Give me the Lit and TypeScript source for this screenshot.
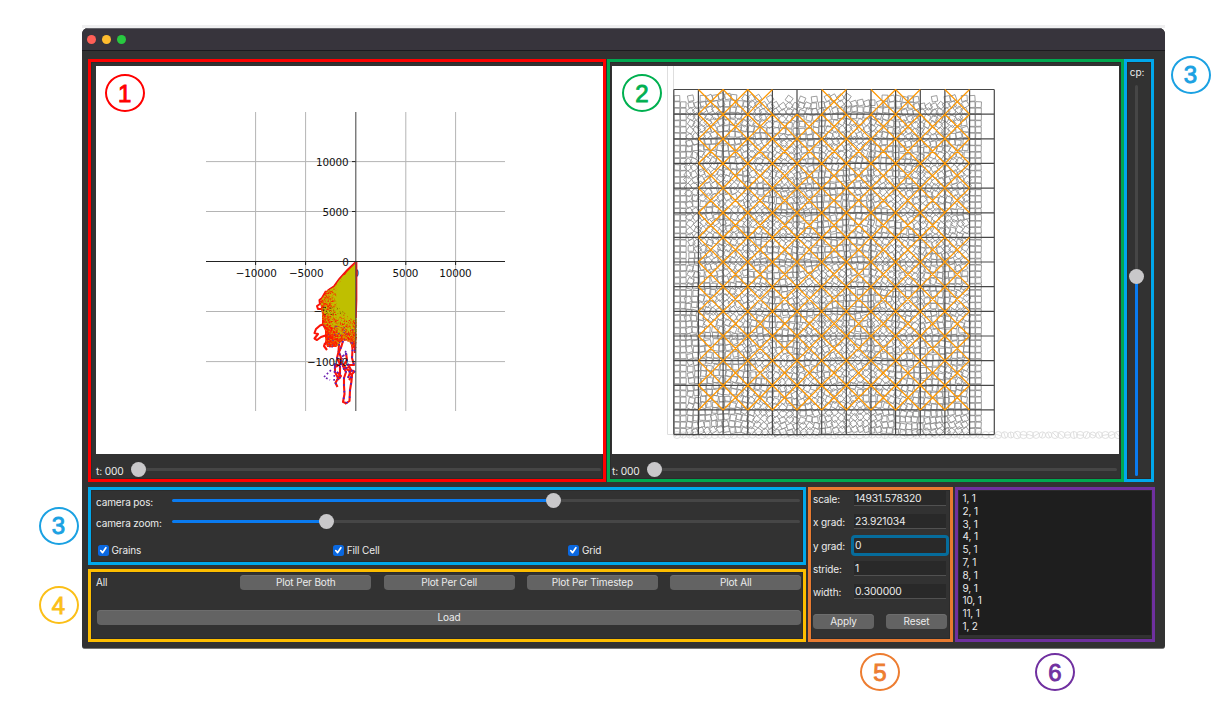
import { LitElement, html, css, svg } from "lit";
import { customElement, property } from "lit/decorators.js";
import { classMap } from "lit/directives/class-map.js";

function makeRandom(seed: number) {
  let s = seed >>> 0;
  return () => {
    s = (s + 0x6d2b79f5) >>> 0;
    let t = s;
    t = Math.imul(t ^ (t >>> 15), t | 1);
    t ^= t + Math.imul(t ^ (t >>> 7), t | 61);
    return ((t ^ (t >>> 14)) >>> 0) / 4294967296;
  };
}

type Point = [number, number];

function inside(x: number, y: number, poly: Point[]) {
  let hit = false;
  for (let i = 0, j = poly.length - 1; i < poly.length; j = i++) {
    const [xi, yi] = poly[i];
    const [xj, yj] = poly[j];
    if (yi > y !== yj > y && x < ((xj - xi) * (y - yi)) / (yj - yi) + xi) hit = !hit;
  }
  return hit;
}

/* ---------- stress scatter plot ---------- */

const CLOUD: Point[] = [
  [356, 262], [347, 270], [339, 279], [334, 286], [327, 290], [323, 296], [320, 302],
  [321, 308], [322, 314], [322, 325], [325, 330], [325, 338], [327, 347], [332, 347], [338, 346],
  [342, 340], [349, 341], [352, 347], [356, 349],
];
const CORE: Point[] = [
  [355.5, 263.5], [347, 272], [340, 282], [337, 290], [336, 300], [338, 307], [344, 312], [349, 318], [355.5, 320],
];

function scatter(seed: number, n: number, poly: Point[], y0: number, y1: number, accept: (x: number, y: number, r: number) => boolean) {
  const rnd = makeRandom(seed);
  let d = "";
  for (let i = 0; i < n; i++) {
    const x = 318 + rnd() * 38;
    const y = y0 + rnd() * (y1 - y0);
    if (inside(x, y, poly) && accept(x, y, rnd())) d += `M${x.toFixed(1)} ${y.toFixed(1)}h1v1h-1z`;
  }
  return d;
}

const toPath = (p: Point[]) => "M" + p.map((q) => q.join(" ")).join("L") + "Z";

const coreDistance = (x: number, y: number) => Math.max(0, (338 - x) * 0.8) + Math.max(0, y - 315) * 0.6;
const OLIVE_DOTS = scatter(7, 6500, CLOUD, 275, 346, (x, y, r) => r > 0.1 + coreDistance(x, y) / 20);
const ORANGE_DOTS = scatter(21, 2400, CLOUD, 284, 346, (x, y, r) => r > 0.35);
const RED_DOTS = scatter(33, 2200, CLOUD, 290, 348, (x, y, r) => r < coreDistance(x, y) / 40);
const BLUE_DOTS = scatter(54, 300, CLOUD, 324, 348, (x, y, r) => r > 0.86);

const TENDRILS = [
  "M326 291L322 298L319.5 300L320 304L317 306L318 309L323 309",
  "M324 324L320 325.5L316 329L314.5 333L318 334L314.5 338.5L317 340L321 337L327 335",
  "M325 343L324 346L327 350M327 339L325 345",
  "M339 344L338.5 352L337 358L340 364L336 367",
  "M343 341L341.5 346L339 352L341 358L341 363",
  "M352 343L352.5 350L352 358L354 365L347 365",
  "M346 353L347 360L343 366L346 372L344 378L344 386L344.5 394L343 402L346 403",
  "M355 371L352 374L351.5 381L350 390L349.5 401L345 404",
  "M335 364L335 372L338 378L335.5 383L337.5 387",
  "M340 366L340 373L338 380M348 364L351 370L348 378",
  "M334 366L342 364L348 370L354 371M343 369L350 367M337 372L341 376L339 379M349 371L352 376L349 380",
  "M355 343V353",
];

@customElement("stress-plot")
export class StressPlot extends LitElement {
  static styles = css`
    :host { display: block; width: 507px; height: 388px; background: #fff; }
    svg { display: block; }
    text { font: 10.4px "DejaVu Sans", sans-serif; fill: #111; }
    .grid { stroke: #b4b4b4; stroke-width: 1; fill: none; }
    .axis { stroke: #222; stroke-width: 1; fill: none; }
    .spine { stroke: #505050; stroke-width: 1.1; fill: none; }
    .end { text-anchor: end; }
    .mid { text-anchor: middle; }
    .red { fill: #ff1a00; }
    .olive { fill: #bfbf00; }
    .orange { fill: #e07a00; }
    .blue { fill: #5a22c0; }
    .tendril { fill: none; stroke: #fb1408; stroke-width: 2.1; stroke-linejoin: round; }
    .tendril-dots { fill: none; stroke: #3b20dd; stroke-width: 1.7; stroke-dasharray: 1.5 5.2; }
    .stray { fill: none; stroke: #6a20b0; stroke-width: 1.7; stroke-dasharray: 1.8 2.2; }
    .edge { fill: none; stroke: #f01010; stroke-width: 1.5; }
  `;
  render() {
    return html`<svg width="507" height="388" viewBox="96 66 507 388">
      <path class="grid" d="M255.6 112V411M305.6 112V411M405.8 112V411M455.6 112V411M206 161.6H505M206 211.5H505M206 311.5H505M206 361.6H505"></path>
      <text class="mid" x="256.3" y="277">−10000</text>
      <text class="mid" x="306.3" y="277">−5000</text>
      <text class="mid" x="355.8" y="277">0</text>
      <text class="mid" x="405.4" y="277">5000</text>
      <text class="mid" x="455.4" y="277">10000</text>
      <path class="red" d=${toPath(CLOUD)}></path>
      ${TENDRILS.map((d, i) => svg`<path class="tendril" d=${d}></path>${i > 2 ? svg`<path class="tendril-dots" d=${d}></path>` : ""}`)}
      <path class="stray" d="M324 377L328 373L331 370M326 378L330 380M335 363L334 382M346 351L342 359M347 354L341 357"></path>
      <path class="orange" d=${ORANGE_DOTS}></path>
      <text class="end" x="348" y="315.3">−5000</text>
      <path class="olive" d=${OLIVE_DOTS}></path>
      <path class="red" d=${RED_DOTS}></path>
      <path class="blue" d=${BLUE_DOTS}></path>
      <path class="olive" d=${toPath(CORE)}></path>
      <path class="edge" d="M356 261.5L347 270L339 279L334 286L328 290M356.6 262V300L356 318"></path>
      <path class="spine" d="M355.8 112V411"></path>
      <path class="axis" d="M206 261.5H505M255.6 261.5v3.5M305.6 261.5v3.5M405.8 261.5v3.5M455.6 261.5v3.5M352 161.6h3.5M352 211.5h3.5M352 361.6h3.5"></path>
      <text class="end" x="348.4" y="165.8">10000</text>
      <text class="end" x="348.4" y="215.5">5000</text>
      <text class="end" x="348.8" y="265.7">0</text>
      <text class="end" x="348" y="365.7">−10000</text>
    </svg>`;
  }
}

/* ---------- grain packing plot ---------- */

const X0 = 673.8;
const Y0 = 89.5;
const PITCH = 24.65;
const EMPTY_CELLS = new Set(["4,0", "5,0", "7,0", "10,0", "11,5"]);

function square(cx: number, cy: number, size: number, angle: number) {
  const r = size / Math.SQRT2;
  const pts: string[] = [];
  for (let k = 0; k < 4; k++) {
    const a = angle + Math.PI / 4 + (k * Math.PI) / 2;
    pts.push(`${(cx + r * Math.cos(a)).toFixed(1)} ${(cy + r * Math.sin(a)).toFixed(1)}`);
  }
  return "M" + pts.join("L") + "Z";
}

function grainPath() {
  const rnd = makeRandom(91);
  const step = 6.28;
  let d = "";
  for (let j = 0; j < 54; j++) {
    for (let i = 0; i < 49; i++) {
      const x = X0 + 3.2 + i * step;
      const y = 431.2 - j * step;
      const wall = i < 2 || i > 46;
      const field = Math.sin(x / 19 + Math.cos(y / 27) * 2) + Math.cos(y / 17 - x / 41);
      const angle = wall ? (rnd() - 0.5) * 0.14 : field * 0.55 + (rnd() - 0.5) * 0.5;
      const dx = wall ? 0 : Math.sin(y / 23 + x / 31) * 1.4 + (rnd() - 0.5) * 1.7;
      const dy = wall ? 0 : Math.cos(x / 21) * 1.4 + (rnd() - 0.5) * 1.7;
      if (j === 53 && rnd() < 0.45) continue;
      d += square(x + dx, y + dy, 5.5 + rnd() * 0.4, angle);
    }
  }
  return d;
}

function gridPath() {
  let d = "";
  for (let i = 0; i <= 13; i++) d += `M${(X0 + i * PITCH).toFixed(1)} ${Y0}V434.6`;
  for (let j = 0; j <= 14; j++) d += `M${X0} ${(Y0 + j * PITCH).toFixed(1)}H994.2`;
  return d;
}

function stressPath() {
  let d = "";
  for (let j = 0; j < 13; j++)
    for (let i = 1; i < 12; i++) {
      if (EMPTY_CELLS.has(`${i},${j}`)) continue;
      const x = X0 + i * PITCH;
      const y = Y0 + j * PITCH;
      d += `M${x.toFixed(1)} ${y.toFixed(1)}l${PITCH} ${PITCH}m0 ${-PITCH}l${-PITCH} ${PITCH}`;
    }
  return d;
}

function floorPath() {
  const rnd = makeRandom(5);
  let d = "";
  for (let x = 677; x < 1122; x += 6.3) {
    const r = 3 + rnd() * 0.8;
    const a = rnd() * Math.PI;
    const c = r * Math.cos(a);
    const s = r * Math.sin(a);
    d += `M${x - r} 435a${r} ${r} 0 1 0 ${2 * r} 0a${r} ${r} 0 1 0 ${-2 * r} 0M${x - c} ${435 - s}l${2 * c} ${2 * s}`;
  }
  return d;
}

const GRAINS = grainPath();
const GRID = gridPath();
const STRESS = stressPath();
const FLOOR = floorPath();

@customElement("grain-plot")
export class GrainPlot extends LitElement {
  static styles = css`
    :host { display: block; width: 507px; height: 388px; background: #fff; }
    svg { display: block; }
    path { fill: none; }
    .wall { stroke: #dedede; stroke-width: 1; }
    .floor { stroke: #dcdcdc; stroke-width: 0.9; }
    .grains { stroke: #8c8c8c; stroke-width: 0.85; }
    .grid { stroke: #484848; stroke-width: 1.2; }
    .stress { stroke: #ff9800; stroke-width: 1.25; }
  `;
  render() {
    return html`<svg width="507" height="388" viewBox="612 66 507 388">
      <path class="wall" d="M667.5 66V434.5H674M673.5 66V434"></path>
      <path class="floor" d=${FLOOR}></path>
      <path class="grains" d=${GRAINS}></path>
      <path class="grid" d=${GRID}></path>
      <path class="stress" d=${STRESS}></path>
    </svg>`;
  }
}

/* ---------- controls ---------- */

@customElement("range-track")
export class RangeTrack extends LitElement {
  @property({ type: Number }) value = 0;
  @property({ type: Boolean, reflect: true }) vertical = false;
  static styles = css`
    :host { display: flex; align-items: center; height: 16px; }
    :host([vertical]) { flex-direction: column; width: 16px; height: auto; }
    .fill { height: 3px; background: #0a7bf0; border-radius: 2px; flex: none; }
    .rest { height: 3px; background: #464646; border-radius: 2px; flex: 1; }
    .knob { width: 15px; height: 15px; margin: 0 -7.5px; border-radius: 50%; background: #c9c8ca; flex: none; z-index: 1; }
    :host([vertical]) .fill, :host([vertical]) .rest { width: 3px; height: auto; }
    :host([vertical]) .knob { margin: -7.5px 0; }
  `;
  render() {
    const size = `${this.value * 100}%`;
    if (this.vertical)
      return html`<div class="rest"></div><div class="knob"></div><div class="fill" style="height:${size}"></div>`;
    return html`<div class="fill" style="width:${size}"></div><div class="knob"></div><div class="rest"></div>`;
  }
}

const FIELDS = [
  { label: "scale:", value: "14931.578320" },
  { label: "x grad:", value: "23.921034" },
  { label: "y grad:", value: "0", focus: true },
  { label: "stride:", value: "1" },
  { label: "width:", value: "0.300000" },
];
const CELLS = ["1, 1", "2, 1", "3, 1", "4, 1", "5, 1", "7, 1", "8, 1", "9, 1", "10, 1", "11, 1", "1, 2"];
const BADGES = [
  { n: 1, x: 124.6, y: 93, tone: "red" },
  { n: 2, x: 642, y: 93, tone: "green" },
  { n: 3, x: 1190.5, y: 74.5, tone: "cyan" },
  { n: 3, x: 58.5, y: 525.7, tone: "cyan" },
  { n: 4, x: 58.5, y: 605, tone: "yellow" },
  { n: 5, x: 880, y: 672, tone: "orange" },
  { n: 6, x: 1055, y: 672.3, tone: "purple" },
];

@customElement("app-root")
export class AppRoot extends LitElement {
  static styles = css`
    :host {
      display: block; position: relative; width: 1218px; height: 706px; overflow: hidden;
      background: #fff; color: #ececec; font: 10px/13px Inter, "Liberation Sans", sans-serif; letter-spacing: -0.13px;
    }
    * { box-sizing: border-box; }
    .page { padding: 25px 53px 0 82px; }
    .glow { height: 3px; background: #efeff0; }
    .window { height: 620.5px; width: 1083px; background: #323232; border-radius: 6px 6px 3px 3px; border-bottom: 1px solid #777; overflow: hidden; }
    .titlebar { height: 23px; background: #37343c; border-top: 1px solid #64646a; border-bottom: 1px solid #1c1b1f; display: flex; align-items: center; gap: 6px; padding-left: 5px; }
    .light { width: 9px; height: 9px; border-radius: 50%; }
    .close { background: #ff5f57; }
    .min { background: #febc2e; }
    .max { background: #28c840; }
    .content { padding: 8px 10px 0 6px; display: flex; flex-direction: column; gap: 5px; }
    .row { display: flex; }
    .panel { border: 3px solid; box-shadow: inset 0 0 0 1px rgba(0, 0, 0, 0.13); }
    .red { border-color: #ff0000; }
    .green { border-color: #00a850; }
    .cyan { border-color: #00a8ec; }
    .yellow { border-color: #fdbd00; }
    .orange { border-color: #e87a30; }
    .purple { border-color: #6f309f; }
    .view { height: 423px; display: flex; flex-direction: column; }
    .first { width: 518px; margin-right: 1px; padding: 4px 0 0 5px; }
    .second { width: 517px; padding: 4px 0 0 2px; }
    .time { display: flex; align-items: center; height: 25px; padding-top: 6px; }
    .time span { width: 42.5px; padding-top: 3px; font-size: 10.2px; }
    .time range-track { width: 462.5px; }
    .side { width: 30px; display: flex; flex-direction: column; align-items: center; padding: 4px 5px 2px 0; }
    .side span { padding-left: 1px; }
    .side range-track { height: 391px; margin-top: 6px; }
    .left { width: 718px; display: flex; flex-direction: column; gap: 4px; margin-right: 2px; }
    .camera { height: 78px; padding: 0 3px 0 5px; }
    .slide { display: flex; align-items: center; height: 21px; }
    .slide span { width: 75.5px; padding-top: 3px; }
    .slide range-track { flex: 1; }
    .checks { display: grid; grid-template-columns: repeat(3, 235.2px); padding: 12px 0 0 2px; }
    .check { display: flex; align-items: center; gap: 3px; }
    .box { width: 10.5px; height: 10.5px; border-radius: 2.5px; background: #0a68e0; display: block; }
    .tick { fill: none; stroke: #fff; stroke-width: 1.6; stroke-linecap: round; stroke-linejoin: round; }
    .plots { height: 73px; padding: 3px 2px 0 5px; }
    .buttons { display: grid; grid-template-columns: 132px repeat(4, 131px); column-gap: 12.3px; align-items: center; }
    .btn { height: 15px; border-radius: 4px; background: #636363; box-shadow: inset 0 1px #6d6d6d; text-align: center; line-height: 15px; display: block; }
    .load { margin: 20px 0 0 1px; width: 704px; }
    .form { width: 145px; height: 155px; padding: 1px 4px 0 2px; margin-right: 2px; }
    .field { display: flex; align-items: flex-start; height: 23.3px; }
    .field label { width: 41px; padding-top: 2px; }
    .input { flex: 1; height: 15px; background: #292929; border-bottom: 1px solid #515151; padding-left: 1px; line-height: 15px; font-size: 10.3px; }
    .focus { outline: 3px solid #066c9c; outline-offset: 0; border-bottom-color: #292929; border-radius: 1px; }
    .actions { display: grid; grid-template-columns: 61px 61px; column-gap: 12px; padding-top: 7px; }
    .list { width: 200px; height: 155px; padding: 1px 1px 0 1px; }
    .items { height: 144px; width: 192px; background: #1e1e1e; padding: 1px 0 0 3.5px; line-height: 12.8px; }
    .badge { position: absolute; width: 40px; height: 38px; margin: -19px 0 0 -20px; border: 2px solid; border-radius: 50%; display: flex; align-items: center; justify-content: center; font: 24px/24px "Liberation Sans", sans-serif; -webkit-text-stroke: 0.9px currentColor; letter-spacing: 0; padding-top: 1px; }
    .badge.red { color: #ff0000; }
    .badge.green { color: #00b050; }
    .badge.cyan { color: #1ba1e2; }
    .badge.yellow { color: #fbbf18; }
    .badge.orange { color: #ed7d31; }
    .badge.purple { color: #7030a0; }
  `;

  private check(label: string) {
    return html`<div class="check">
      <svg class="box" viewBox="0 0 10 10"><path class="tick" d="M2.6 5.3L4.3 7.3L7.5 2.6"></path></svg><span>${label}</span>
    </div>`;
  }

  render() {
    return html`
      <div class="page">
        <div class="glow"></div>
        <div class="window">
          <div class="titlebar">
            <i class="light close"></i><i class="light min"></i><i class="light max"></i>
          </div>
          <div class="content">
            <div class="row">
              <section class="panel view first red">
                <stress-plot></stress-plot>
                <div class="time"><span>t: 000</span><range-track .value=${0}></range-track></div>
              </section>
              <section class="panel view second green">
                <grain-plot></grain-plot>
                <div class="time"><span>t: 000</span><range-track .value=${0}></range-track></div>
              </section>
              <section class="panel side cyan">
                <span>cp:</span>
                <range-track vertical .value=${0.51}></range-track>
              </section>
            </div>
            <div class="row">
              <div class="left">
                <section class="panel camera cyan">
                  <div class="slide"><span>camera pos:</span><range-track .value=${0.608}></range-track></div>
                  <div class="slide"><span>camera zoom:</span><range-track .value=${0.246}></range-track></div>
                  <div class="checks">${["Grains", "Fill Cell", "Grid"].map((l) => this.check(l))}</div>
                </section>
                <section class="panel plots yellow">
                  <div class="buttons">
                    <span>All</span>
                    ${["Plot Per Both", "Plot Per Cell", "Plot Per Timestep", "Plot All"].map((l) => html`<span class="btn">${l}</span>`)}
                  </div>
                  <span class="btn load">Load</span>
                </section>
              </div>
              <section class="panel form orange">
                ${FIELDS.map((f) => html`<div class="field"><label>${f.label}</label><div class=${classMap({ input: true, focus: !!f.focus })}>${f.value}</div></div>`)}
                <div class="actions"><span class="btn">Apply</span><span class="btn">Reset</span></div>
              </section>
              <section class="panel list purple">
                <div class="items">${CELLS.map((c) => html`<div>${c}</div>`)}</div>
              </section>
            </div>
          </div>
        </div>
      </div>
      ${BADGES.map((b) => html`<div class="badge ${b.tone}" style="left:${b.x}px;top:${b.y}px">${b.n}</div>`)}
    `;
  }
}
